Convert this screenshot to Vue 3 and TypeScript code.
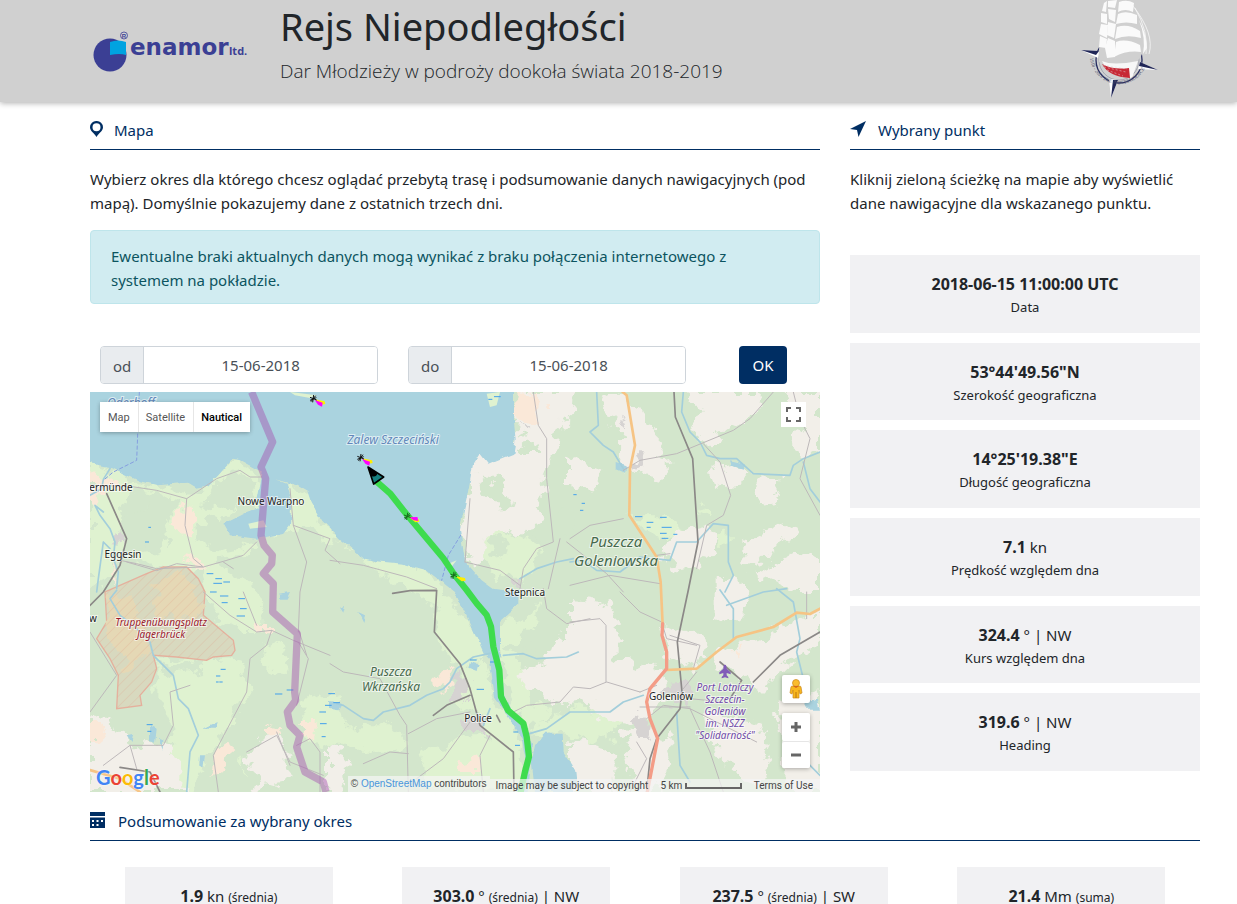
<script setup lang="ts">
import { ref } from 'vue'

interface Stat {
  value: string
  unit?: string
  note?: string
  tail?: string
  label?: string
}

const from = ref('15-06-2018')
const to = ref('15-06-2018')
const mapType = ref('Nautical')
const mapTypes = ['Map', 'Satellite', 'Nautical']

const point: Stat[] = [
  { value: '2018-06-15 11:00:00 UTC', label: 'Data' },
  { value: '53°44\'49.56"N', label: 'Szerokość geograficzna' },
  { value: '14°25\'19.38"E', label: 'Długość geograficzna' },
  { value: '7.1', unit: 'kn', label: 'Prędkość względem dna' },
  { value: '324.4', unit: '° | NW', label: 'Kurs względem dna' },
  { value: '319.6', unit: '° | NW', label: 'Heading' },
]

const summary: Stat[] = [
  { value: '1.9', unit: 'kn', note: '(średnia)' },
  { value: '303.0', unit: '°', note: '(średnia)', tail: '| NW' },
  { value: '237.5', unit: '°', note: '(średnia)', tail: '| SW' },
  { value: '21.4', unit: 'Mm', note: '(suma)' },
]

// Terrain is drawn on a 2190 x 1200 grid, three units per map pixel.
const beige = [
  'M1150 190L1270 180L1280 0L1460 0L1455 60L1400 110L1390 190L1360 260L1350 330L1340 400L1310 440L1240 410L1190 440L1180 510L1130 500L1110 400Z',
  'M1520 20L1610 0L1640 60L1680 110L1720 150L1700 190L1740 220L1700 260L1650 250L1600 240L1580 190L1610 130L1560 90Z',
  'M1790 0L2010 0L2000 70L1930 110L1880 150L1830 140L1800 90L1830 50Z',
  'M2090 0L2190 0L2190 170L2140 200L2100 170L2130 90Z',
  'M1440 200L1490 220L1540 230L1520 290L1470 300L1440 280Z',
  'M1860 230L1930 220L1970 250L1940 290L1880 280Z',
  'M2000 250L2080 260L2070 320L2010 330L2000 290Z',
  'M2020 420L2090 390L2110 420L2060 480L2010 510L1960 520L1960 460Z',
  'M1740 430L1850 400L1880 470L1820 520L1750 530L1720 490Z',
  'M1880 550L1960 560L1980 650L1940 700L1880 680Z',
  'M1440 620L1540 630L1580 690L1580 790L1640 830L1700 800L1730 870L1700 960L1640 1000L1560 980L1500 950L1440 880Z',
  'M1700 690L1830 720L1850 800L1800 830L1730 780Z',
  'M1880 780L2010 740L2190 650L2190 740L2080 830L2010 900L1950 850L1900 830Z',
  'M1990 540L2120 600L2190 600L2190 500L2110 480Z',
  'M1400 730L1470 720L1500 790L1560 850L1500 930L1390 940L1350 900L1290 870L1310 830L1370 810Z',
  'M1440 1050L1560 1070L1600 1120L1560 1200L1440 1200Z',
  'M1600 1020L1720 1010L1750 1100L1700 1200L1640 1190Z',
  'M1850 960L2000 990L2040 1080L2000 1190L1930 1140L1860 1060Z',
  'M2060 940L2190 900L2190 1200L2090 1200Z',
  'M0 970L60 980L110 1060L220 1060L280 1130L280 1200L0 1200Z',
  'M470 1070L560 1020L600 1100L590 1170L500 1190Z',
  'M720 1070L760 1090L770 1160L720 1200Z',
]
const grass = [
  'M0 210L80 240L150 280L320 300L430 200L500 235L520 300L450 340L400 400L350 370L280 420L220 300L140 290L90 350L100 450L60 560L0 590Z',
  'M510 270L640 290L700 390L750 440L720 460L640 400L610 440L540 430L500 440L490 380Z',
  'M230 350L310 350L320 440L400 470L500 450L500 480L380 500L350 530L200 530L130 500L220 480Z',
  'M750 450L840 500L1000 520L1060 570L1080 620L1150 720L1200 790L1120 830L1060 780L1030 700L1050 640L960 600L850 530Z',
  'M1220 410L1330 450L1350 490L1310 560L1230 560L1180 500L1190 430Z',
  'M190 800L400 790L460 800L470 900L430 980L360 1080L300 1200L230 1200L250 1000L190 900Z',
  'M330 530L420 520L520 640L520 720L460 720L390 680L340 590Z',
  'M640 920L740 900L760 1000L900 1000L960 1060L850 1070L720 1070L640 1030Z',
  'M520 770L570 750L600 810L550 850Z',
  'M1130 830L1190 800L1210 920L1260 970L1290 1030L1280 1100L1220 1080L1160 960L1090 930Z',
  'M1230 700L1330 660L1360 630L1320 700L1250 770L1370 830L1310 870L1330 940L1390 950L1330 1010L1270 960L1240 860Z',
  'M1320 1010L1440 950L1580 960L1590 1020L1500 1060L1440 1030Z',
  'M990 1080L1130 1030L1230 1030L1290 1120L1280 1200L1130 1190L1020 1170Z',
  'M1630 370L1760 370L1770 430L1720 450L1660 410Z',
  'M1860 430L1910 410L1910 480Z',
  'M1830 340L1860 350L1870 380L1820 360Z',
  'M440 1100L470 1090L460 1140Z',
]
const forest = [
  'M1160 260L1240 260L1260 330L1230 350L1190 310Z',
  'M1290 150L1340 140L1350 180L1300 180Z',
  'M1200 430L1240 440L1250 480L1220 500Z',
  'M1360 370L1440 340L1460 400L1400 450L1320 440Z',
  'M100 380L210 320L280 330L230 400L210 470L120 490L90 430Z',
  'M370 280L440 240L500 270L480 320L430 350L340 340Z',
  'M190 820L330 800L340 830L240 850Z',
  'M1300 760L1360 790L1380 810L1290 840Z',
  'M1580 1020L1600 1010L1620 1150L1600 1200L1570 1180Z',
]
const peach = [
  'M250 400L280 340L310 350L305 430L280 440Z', 'M280 490L345 500L340 530L310 530Z',
  'M1270 10L1340 0L1360 40L1335 100L1285 95Z', 'M500 690L540 690L540 730L510 730Z',
  'M1040 860L1080 820L1085 870L1050 900Z', 'M0 240L60 250L90 290L40 300L20 330L0 320Z',
  'M540 1000L580 1010L570 1030L540 1030Z', 'M630 990L680 990L680 1030L640 1030Z',
  'M380 1070L415 1060L400 1130L370 1160Z', 'M1110 1110L1160 1100L1170 1140L1120 1140Z',
  'M1920 770L1950 770L1940 800Z', 'M0 990L40 1000L30 1060L0 1060Z', 'M60 540L90 500L60 600Z',
]
const towns = [
  'M1080 880L1110 830L1135 880L1130 910L1080 930Z', 'M1610 970L1650 960L1690 1020L1680 1050L1650 1050Z',
  'M1720 880L1790 870L1800 930L1740 950Z', 'M1635 190L1670 190L1660 220L1625 240Z',
  'M1110 985L1170 990L1200 1020L1150 1020Z', 'M90 410L110 430L100 460L85 440Z',
  'M1280 105L1320 115L1300 125Z', 'M1260 570L1290 560L1290 590Z', 'M1580 80L1620 90L1610 110Z',
]
const rivers = [
  'M60 230L40 262L35 290L0 310M40 360L15 340L30 370L60 410L75 450L70 500L85 540L80 590',
  'M60 470L40 450L25 560L20 600M80 595L60 620L90 670L130 700L180 750L190 790L250 850L265 920L295 950L325 1030L300 1080L290 1200',
  'M1240 790L1300 785L1340 800L1430 795L1465 780',
  'M1200 784L1150 795L1100 830L1080 870L1060 890L1010 910L960 940L880 960L850 985L820 980L760 940L740 935',
  'M1520 0L1525 100L1500 120L1540 160L1570 180L1600 230',
  'M1780 0L1775 60L1800 120L1830 150L1850 190L1890 200L1940 200L1990 245L2100 250L2110 220L2140 200L2190 180M2140 210L2160 290L2190 330',
  'M1440 510L1480 505L1520 535L1590 540L1650 495L1740 505L1760 450L1820 450L1870 395L1915 400L1915 510L1930 550L1905 600',
  'M1290 560L1340 530L1400 510L1450 500', 'M1890 594L1930 650L1930 740M2060 590L2110 630L2130 740L2120 780L2150 900',
  'M1910 640L2020 600L2090 590', 'M1300 1030L1370 1010L1440 960L1560 960L1600 930L1660 910',
  'M1760 960L1770 1120L1800 1170M1180 1000L1200 950M2140 1100L2190 1150',
]
const roads = [
  'M0 280L120 283L200 295L290 320L380 260L450 235L480 255L515 255M290 320L285 400L310 500L340 525L200 530L140 515L90 505',
  'M110 510L200 536L260 515L340 525L400 508L460 490L500 450M430 530L400 510M600 290L610 400L720 440L705 475L750 515',
  'M610 400L650 510L630 600L625 720M340 600L420 670L500 720L545 715L610 745L720 790M460 600L500 700',
  'M545 715L530 760L480 800L470 900L370 1090L385 1200M625 750L655 800L620 940M625 710L650 790',
  'M720 505L820 520L950 555L1040 590M0 720L80 850L0 960M300 880L240 900L250 1000L220 1060L120 1060L40 1120M120 1060L140 1130',
  'M470 1080L560 1030L600 1110L700 1150M560 1020L600 1120M690 1200L690 1080L660 1040L620 1060',
  'M720 815L760 840L870 860L930 970L950 1000L955 1200M955 1025L1040 980L1140 960M820 1115L900 1080L955 1085',
  'M1140 990L1060 1100L980 1160M1200 1030L1170 1090L1180 1200M1270 960L1310 940L1410 930L1450 885L1500 890L1550 870L1650 900',
  'M1360 590L1370 650L1430 695L1500 680M1440 690L1530 680L1548 700L1548 870M1590 600L1650 660L1715 690L1730 740L1820 760',
  'M1600 380L1500 400L1440 440M1600 235L1650 205L1760 185L1930 115L1980 80L2050 0M1840 155L1890 210L1922 310L1900 370L1850 400L1820 530',
  'M1440 580L1560 550L1710 575M1430 450L1550 545L1600 600M1740 485L1700 490M1740 730L1830 760L1810 830',
  'M1330 0L1345 100L1370 140L1370 260L1390 450L1340 470L1300 530L1290 590M1125 510L1230 535L1290 580M1410 440L1375 590M1140 320L1125 510',
  'M2110 0L2130 80L2160 140L2140 220L2130 260L2190 370M1670 980L1720 940L1800 950L2000 1050M1800 920L1900 930M1800 950L1860 1080L1900 1200',
  'M2150 600L2150 680M1780 890L1820 840M1640 1050L1670 1100L1620 1200M1650 945L1800 945M1700 880L1650 900',
]
const rails = [
  'M90 1126L180 1140L210 1200M50 305L110 440L90 520L40 600L0 640', 'M908 604L960 596L1040 595L1033 720L1110 815L1140 890L1170 1000L1270 1080L1272 1200',
  'M1140 910L1070 940L1030 970M1230 990L1220 970', 'M1752 0L1756 75L1808 200L1824 450L1795 594L1762 750L1776 900L1770 950L1700 1040L1680 1100L1670 1200',
  'M1890 810L1955 865L1920 920M1990 870L2070 790L2190 720',
]
const orange = [
  'M1598 0L1610 10L1635 160L1620 230L1618 370L1700 495L1712 570L1718 700',
  'M1728 834L1820 830L1880 780L1940 735L2050 705L2120 662L2160 666L2190 650', 'M0 1134L90 1160L150 1200',
]
const coral = 'M1718 695L1716 730L1730 780L1730 830L1680 890L1670 930L1680 980L1703 1040L1672 1200'
const border =
  'M485 0L548 150L513 225L527 260L522 320L513 430L522 460L547 490L545 515L520 545L550 575L548 660L622 725L614 900L617 925L592 960L600 1000L630 1030L620 1065L645 1140L700 1170L708 1200'
const track =
  'M860 269L900 304L952 370L1060 499L1091 545L1130 594L1160 634L1190 669L1203 704L1210 764L1228 834L1233 914L1255 956L1300 994L1310 1034L1317 1094L1305 1139L1292 1200'
const marsh =
  'M350 545h20M376 560h20M370 574h26M400 570h20M360 600h20M390 612h25M445 620h20M450 650h20M440 672h25M395 632h18M392 832h15M378 852h13M378 870h8M388 870h10M555 906h22M590 894h20M715 905h20M705 940h20M730 932h20M690 995h20M695 1034h12M688 960h20M1635 374h22M1670 391h20M1710 376h20M1715 406h30M1670 406h12M1710 424h20M1715 439h20M1750 427h12M1450 308h10M1475 334h10M1470 355h10M1140 804h20M1160 892h22M1200 810h12M1270 1020h15M1275 1060h15M170 998h18M172 1018h12M1195 22h12M1212 14h20M175 406h8M165 450h12'
</script>

<template>
  <div class="page">
    <header class="banner">
      <svg class="enamor" viewBox="0 0 154 42" role="img" aria-label="enamor ltd.">
        <circle cx="17" cy="24" r="16.500" fill="#3b3f94" />
        <path d="M17 11Q25 8 33 11V24Q27 22 17 24Z" fill="#00a3e0" />
        <circle cx="31" cy="4.500" r="3.500" fill="none" stroke="#3b3f94" stroke-width="0.800" />
        <text x="31" y="6.500" class="reg">R</text>
        <text x="37" y="24" class="brand">enamor</text>
        <text x="136" y="24" class="ltd">ltd.</text>
      </svg>
      <div class="titles">
        <h1>Rejs Niepodległości</h1>
        <p class="lead">Dar Młodzieży w podroży dookoła świata 2018-2019</p>
      </div>
      <svg class="ship" viewBox="0 0 80 100" role="img" aria-label="1918 - 2018 The Independence Sail">
        <defs><path id="ring" d="M11 58A29 29 0 0 0 69 52" /></defs>
        <circle cx="40" cy="60" r="23" fill="none" stroke="#252a5e" stroke-width="1.300" />
        <circle cx="40" cy="60" r="20" fill="none" stroke="#777a93" stroke-width="0.500" />
        <path d="M2 50L20 51L19 58ZM79 70L61 62L59 69ZM32 98L30 79L39 80Z" fill="#fff" />
        <path d="M2 50L20 51L17 55ZM79 70L61 62L60 66ZM32 98L34 80L39 80Z" fill="#202657" />
        <path d="M22 5Q20 30 20 62L50 76L58 61Q66 55 65 35L55 11L44 0Z" fill="#d0d0d0" />
        <path d="M23 61Q34 66 59 61L53 78Q30 77 23 61Z" fill="#f7f7f7" />
        <path d="M23 64Q34 70 50 68L51 78Q30 77 23 64Z" fill="#c72835" />
        <path d="M24 65L48 69M25 67L47 72M28 70L44 76" fill="none" stroke="#ddd" stroke-width="0.500" stroke-dasharray="2 2" />
        <g fill="#fafafa">
          <path d="M25 3L28 1L27 12L23 11ZM22 13L28 14L28 24L22 22ZM22 24L29 25L28 38L20 34ZM21 36L28 39L27 48L20 47Z" />
          <path d="M29 1L38 0L36 8L29 7ZM29 9L37 10L36 22L30 19ZM29 22L37 24L35 38L28 35ZM29 38L36 41L36 57L28 58L26 48Z" />
          <path d="M40 2Q48 -1 55 3L54 12Q46 8 39 12ZM39 14Q47 10 58 15L58 24Q47 21 37 24ZM38 27Q49 23 61 31L62 38Q48 34 36 39ZM37 42Q47 38 61 45L62 52Q48 50 35 57Z" />
          <path d="M60 20Q67 32 68 48L64 54Q67 38 60 20Z" />
        </g>
        <path d="M56 8Q70 32 67 54M54 6Q76 34 70 54" fill="none" stroke="#f8f8f8" stroke-width="0.800" />
        <text class="ringtext"><textPath href="#ring">1918 - 2018 THE INDEPENDENCE</textPath></text>
      </svg>
    </header>

    <main class="content">
      <div class="columns">
        <section>
          <h2 class="heading">
            <svg class="icon" viewBox="0 0 13 16" aria-hidden="true"><path fill="#002e63" fill-rule="evenodd" d="M6.500 0A6.300 6.300 0 0 0 0 6.300C0 10 4 12 6.500 16C9 12 13 10 13 6.300A6.300 6.300 0 0 0 6.500 0ZM6.500 2.200A4 4 0 1 1 6.500 10.200A4 4 0 0 1 6.500 2.200Z" /></svg>
            Mapa
          </h2>
          <p class="intro">Wybierz okres dla którego chcesz oglądać przebytą trasę i podsumowanie danych nawigacyjnych (pod mapą). Domyślnie pokazujemy dane z ostatnich trzech dni.</p>
          <div class="alert">Ewentualne braki aktualnych danych mogą wynikać z braku połączenia internetowego z systemem na pokładzie.</div>

          <form class="range" @submit.prevent>
            <div class="group">
              <label for="from">od</label>
              <input id="from" v-model="from" type="text" />
            </div>
            <div class="group">
              <label for="to">do</label>
              <input id="to" v-model="to" type="text" />
            </div>
            <button type="submit" class="ok">OK</button>
          </form>

          <div class="map">
            <svg class="terrain" viewBox="0 0 730 400" preserveAspectRatio="xMidYMid slice" role="img" aria-label="Mapa">
              <defs>
                <filter id="rough" x="-10%" y="-10%" width="120%" height="120%">
                  <feTurbulence type="fractalNoise" baseFrequency="0.022" numOctaves="4" seed="4" />
                  <feDisplacementMap in="SourceGraphic" scale="75" xChannelSelector="R" yChannelSelector="G" />
                </filter>
                <filter id="shore">
                  <feTurbulence type="fractalNoise" baseFrequency="0.030" numOctaves="3" seed="9" />
                  <feDisplacementMap in="SourceGraphic" scale="16" xChannelSelector="R" yChannelSelector="G" />
                </filter>
                <pattern id="hatch" width="22" height="22" patternUnits="userSpaceOnUse" patternTransform="rotate(45)">
                  <path d="M0 0V22" stroke="#e09a85" stroke-width="2" />
                </pattern>
              </defs>
              <g transform="scale(0.33333)">
                <path d="M0 0H2190V1200H0Z" fill="#d3e6cc" />
                <g filter="url(#rough)">
                  <path v-for="d in grass" :key="d" :d="d" fill="#dff2d0" />
                  <path v-for="d in beige" :key="d" :d="d" fill="#f2efe9" />
                  <path v-for="d in forest" :key="d" :d="d" fill="#d3e6cc" />
                  <path v-for="d in peach" :key="d" :d="d" fill="#fae8d8" />
                  <path v-for="d in towns" :key="d" :d="d" fill="#d6d3d2" />
                </g>
                <path d="M170 545L220 525L290 525L325 560L345 600L340 670L430 745L435 775L425 790L370 795L350 805L260 795L190 790L200 830L185 870L150 910L155 940L80 950L85 850L60 800L20 740L50 690L45 600Z" fill="#d8d9bf" stroke="#e5b09d" stroke-width="4" />
                <g filter="url(#rough)" fill="#e5d8b5"><path d="M190 560L290 540L330 640L310 700L190 660ZM60 610L130 620L180 780L110 830L50 720Z" /></g>
                <path d="M170 545L220 525L290 525L325 560L345 600L340 670L430 745L435 775L425 790L370 795L350 805L260 795L190 790L200 830L185 870L150 910L155 940L80 950L85 850L60 800L20 740L50 690L45 600Z" fill="url(#hatch)" opacity="0.600" />
                <g filter="url(#shore)" fill="#aad3df">
                  <path d="M-20 -20H1272V90L1277 145L1270 185L1220 205L1195 215L1170 184L1150 215L1130 320L1110 410L1125 508L1175 565L1210 590L1285 600L1285 640L1230 690L1230 820L1240 900L1260 950L1305 1000L1325 1060L1325 1110L1310 1220H1285L1310 1120L1295 1040L1255 975L1215 920L1205 850L1200 800L1180 780L1130 670L1095 600L1050 565L1010 535L940 515L860 508L825 500L750 440L700 390L665 330L655 300L620 280L555 262L590 275L605 320L600 400L580 425L500 440L420 430L400 395L470 360L510 345L500 320L515 240L450 205L430 200L380 255L350 285L320 290L290 272L200 280L150 268L85 238L60 225L-20 210Z" />
                  <path d="M1335 1060L1360 1025L1415 1025L1418 1080L1445 1120L1450 1200H1335L1325 1110ZM1580 210L1610 220L1605 245L1580 235ZM1920 205L1965 215L1960 230L1925 222ZM180 1000L200 1010L195 1055L180 1050ZM340 1010L380 990L375 1010ZM330 1090L345 1090L340 1125L328 1120ZM110 1030L130 1025L125 1050ZM750 650L765 645L760 665ZM805 660L825 670L820 690ZM720 930L755 935L745 955L720 950ZM570 605L600 600L590 620L570 620ZM2140 930L2180 920L2190 950L2150 950ZM1440 1120L1455 1130L1460 1180L1440 1190ZM1140 810L1165 820L1160 840L1135 830ZM207 1040L220 1045L218 1070Z" />
                </g>
                <path d="M1190 5L1230 0L1220 40L1200 45ZM600 0L680 10L660 18L615 10ZM1075 515L1100 505L1080 530ZM475 395L520 385L530 405L480 410Z" fill="#dff2d0" />
                <g fill="none" stroke-linejoin="round" stroke-linecap="round">
                  <path v-for="d in rivers" :key="d" :d="d" stroke="#a3cedb" stroke-width="5" />
                  <path v-for="d in roads" :key="d" :d="d" stroke="#bdb8ba" stroke-width="3" />
                  <path v-for="d in rails" :key="d" :d="d" stroke="#8b8887" stroke-width="5" />
                  <path v-for="d in orange" :key="d" :d="d" stroke="#f6c484" stroke-width="8" />
                  <path :d="coral" stroke="#f49c86" stroke-width="10" />
                  <path :d="marsh" stroke="#409fec" stroke-width="3" stroke-linecap="butt" />
                  <path d="M148 0L140 205L70 240L40 265M1112 430L1075 490L1055 565" stroke="#859ee0" stroke-width="3" stroke-dasharray="10 8" />
                  <path :d="border" stroke="#a44fb0" stroke-width="22" stroke-linecap="butt" opacity="0.450" />
                  <path :d="track" stroke="#3edc4e" stroke-width="19" />
                </g>
                <g v-for="(m, i) in [[670, 20], [812, 197], [952, 373], [1091, 550]]" :key="i" :transform="`translate(${m[0]} ${m[1]})`">
                  <path d="M4 2L34 8L36 16L24 18Z" fill="#ffee00" />
                  <path v-if="i < 3" d="M4 4L28 12L26 24L14 18Z" fill="#f0f" :transform="i === 2 ? 'rotate(-20)' : ''" />
                  <path d="M-10 -4L10 4M-7 9L7 -9M1 -11L-2 11M-10 5L9 -3" :stroke="i < 2 ? '#111' : '#176b1d'" stroke-width="3" />
                </g>
                <path d="M834 225L881 255L851 276Z" fill="#16807f" stroke="#000" stroke-width="5" stroke-linejoin="round" />
                <path d="M834 225L862 243Q860 258 843 252Z" fill="#000" />
                <path d="M1905 818C1909 818 1910 824 1910 830L1922 841V847L1910 843V850L1915 855V859L1905 856L1895 859V855L1900 850V843L1888 847V841L1900 830C1900 824 1901 818 1905 818Z" fill="#805ab8" />
              </g>
              <g class="places">
                <text class="sea" x="41" y="15" font-size="12">Oderhoff</text>
                <text class="sea" x="303" y="52" font-size="12">Zalew Szczeciński</text>
                <text x="181" y="113">Nowe Warpno</text>
                <text x="21" y="99">ermünde</text>
                <text x="33" y="166">Eggesin</text>
                <text x="3" y="230">w</text>
                <text x="435" y="204">Stepnica</text>
                <text x="388" y="330">Police</text>
                <text x="581" y="308">Goleniów</text>
                <g class="wood" font-size="15"><text x="526" y="155">Puszcza</text><text x="526" y="174">Goleniowska</text></g>
                <g class="wood" font-size="12"><text x="301" y="284">Puszcza</text><text x="301" y="299">Wkrzańska</text></g>
                <g class="army"><text x="71" y="234">Truppenübungsplatz</text><text x="71" y="246">Jägerbrück</text></g>
                <g class="air"><text x="635" y="299">Port Lotniczy</text><text x="635" y="311">Szczecin-</text><text x="635" y="323">Goleniów</text><text x="635" y="335">im. NSZZ</text><text x="635" y="347">"Solidarność"</text></g>
              </g>
            </svg>

            <div class="types">
              <button v-for="t in mapTypes" :key="t" type="button" :class="{ on: t === mapType }" @click="mapType = t">{{ t }}</button>
            </div>
            <button type="button" class="full" aria-label="Fullscreen">
              <svg viewBox="0 0 15 15" aria-hidden="true"><path d="M1 5V1H5M10 1H14V5M14 10V14H10M5 14H1V10" fill="none" stroke="#666" stroke-width="2" /></svg>
            </button>
            <div class="side">
              <button type="button" class="pegman" aria-label="Street View">
                <svg viewBox="0 0 14 20" aria-hidden="true">
                  <path d="M2 8Q2 7 4 7H10Q12 7 12 8L13 14L11 15L10 11V19H4V11L3 15L1 14Z" fill="#f9b71e" stroke="#c9871c" stroke-width="0.700" />
                  <path d="M7 13V19" stroke="#b87511" />
                  <circle cx="7" cy="4" r="3.500" fill="#fbbc2c" stroke="#c9871c" stroke-width="0.700" />
                  <path d="M4 7H10L7 9Z" fill="#d5651b" />
                </svg>
              </button>
              <div class="zoom">
                <button type="button" aria-label="Zoom in"><svg viewBox="0 0 12 12" aria-hidden="true"><path d="M1 6H11M6 1V11" stroke="#666" stroke-width="3" /></svg></button>
                <button type="button" aria-label="Zoom out"><svg viewBox="0 0 12 12" aria-hidden="true"><path d="M1 6H11" stroke="#666" stroke-width="3" /></svg></button>
              </div>
            </div>
            <div class="google" aria-label="Google"><span class="b">G</span><span class="r">o</span><span class="y">o</span><span class="b">g</span><span class="g">l</span><span class="r">e</span></div>
            <div class="credits">
              <span class="osm">© <a href="#">OpenStreetMap</a> contributors</span>
              <div class="legal">
                <span>Image may be subject to copyright</span>
                <span class="scale">5 km <i></i></span>
                <a href="#">Terms of Use</a>
              </div>
            </div>
          </div>
        </section>

        <section>
          <h2 class="heading">
            <svg class="icon arrow" viewBox="0 0 16 16" aria-hidden="true"><path fill="#002e63" d="M16 0L0 8L7 9L8.500 16Z" /></svg>
            Wybrany punkt
          </h2>
          <p class="intro">Kliknij zieloną ścieżkę na mapie aby wyświetlić dane nawigacyjne dla wskazanego punktu.</p>
          <div class="cards">
            <div v-for="s in point" :key="s.label" class="card">
              <div class="value"><strong>{{ s.value }}</strong> {{ s.unit }}</div>
              <div class="label">{{ s.label }}</div>
            </div>
          </div>
        </section>
      </div>

      <section class="period">
        <h2 class="heading">
          <svg class="icon calc" viewBox="0 0 15 16" aria-hidden="true">
            <path fill="#002e63" d="M0 0H15V4H0ZM0 5.500H15V16H0Z" />
            <path fill="#fff" d="M2 8h2v2h-2zM6.500 8h2v2h-2zM11 8h2v2h-2zM2 12h2v2h-2zM6.500 12h2v2h-2z" />
          </svg>
          Podsumowanie za wybrany okres
        </h2>
        <div class="summary">
          <div v-for="s in summary" :key="s.value" class="card">
            <div class="value"><strong>{{ s.value }}</strong> {{ s.unit }} <small>{{ s.note }}</small> {{ s.tail }}</div>
          </div>
        </div>
      </section>
    </main>
  </div>
</template>

<style>
html,
body {
  margin: 0;
  background: #fff;
}
</style>

<style scoped>
* {
  box-sizing: border-box;
}
.page {
  height: 100vh;
  overflow: hidden;
  font: 15px/24px "Noto Sans", "Open Sans", sans-serif;
  color: #212529;
}
.banner {
  display: flex;
  align-items: flex-start;
  height: 102px;
  padding: 0 78px 0 93px;
  background: #d0d0d0;
  box-shadow: 0 1px 6px #aaa;
}
.enamor {
  width: 154px;
  height: 42px;
  margin-top: 31px;
  overflow: visible;
}
.brand {
  font: bold 23px "DejaVu Sans", sans-serif;
  fill: #3b3f94;
}
.ltd {
  font: bold 11px "Open Sans", sans-serif;
  fill: #3b3f94;
}
.reg {
  font: bold 6px "Liberation Sans", sans-serif;
  fill: #3b3f94;
  text-anchor: middle;
}
.titles {
  flex: 1;
  margin-left: 33px;
}
h1 {
  margin: 0;
  font-size: 38px;
  font-weight: 400;
  line-height: 52px;
}
.lead {
  margin: 4px 0 0;
  font-family: "Open Sans", "Noto Sans", sans-serif;
  font-size: 19px;
  font-weight: 300;
  line-height: 30px;
}
.ship {
  width: 80px;
  height: 100px;
}
.ringtext {
  font: 5px "Liberation Serif", serif;
  fill: #555872;
}
.content {
  padding: 0 37px 0 90px;
}
.columns {
  display: grid;
  grid-template-columns: minmax(0, 730fr) minmax(0, 350fr);
  gap: 30px;
}
.heading {
  display: flex;
  align-items: center;
  height: 48px;
  margin: 0 0 17px;
  padding-top: 9px;
  border-bottom: 1px solid #002e63;
  font-size: 15px;
  font-weight: 400;
  color: #002e63;
}
.icon {
  width: 13px;
  height: 16px;
  margin: 0 11px 3px 0;
}
.arrow {
  width: 16px;
  margin-right: 12px;
}
.calc {
  width: 15px;
  margin-right: 13px;
}
.intro {
  margin: 0 0 15px;
}
.alert {
  padding: 13px 20px 11px;
  border: 1px solid #bee5eb;
  border-radius: 4px;
  background: #d1ecf1;
  color: #0c5460;
}
.range {
  display: flex;
  gap: 30px;
  margin: 42px 0 8px;
  padding: 0 33px 0 10px;
}
.group {
  display: flex;
  flex: 0 1 278px;
  min-width: 0;
  height: 38px;
  border: 1px solid #ced4da;
  border-radius: 4px;
  overflow: hidden;
}
.group label {
  padding: 7px 12px;
  border-right: 1px solid #ced4da;
  background: #e9ecef;
  color: #495057;
}
.group input {
  flex: 1;
  min-width: 0;
  border: 0;
  padding: 4px 12px;
  background: #fff;
  font: 15px "Noto Sans", sans-serif;
  color: #495057;
  text-align: center;
}
.ok {
  width: 48px;
  height: 38px;
  margin-left: auto;
  padding: 0;
  border: 0;
  border-radius: 4px;
  background: #002e63;
  color: #fff;
  font: 15px "Noto Sans", sans-serif;
}
.map {
  position: relative;
  height: 400px;
  overflow: hidden;
}
.terrain {
  display: block;
  width: 100%;
  height: 100%;
}
.places text {
  font-family: "Noto Sans", sans-serif;
  text-anchor: middle;
  paint-order: stroke;
  stroke: rgba(255, 255, 255, 0.6);
  stroke-width: 2px;
  fill: #222;
}
.places {
  font-size: 10px;
}
.places .sea {
  fill: #6188ba;
  font-style: italic;
}
.places .wood text {
  fill: #46694c;
  font-style: italic;
}
.places .army text {
  fill: #9a1a2d;
  font-style: italic;
}
.places .air text {
  fill: #704ba8;
  font-style: italic;
}
.map button {
  padding: 0;
  border: 0;
  background: #fff;
}
.types {
  position: absolute;
  top: 10px;
  left: 10px;
  display: flex;
  border-radius: 2px;
  box-shadow: 0 1px 4px rgba(0, 0, 0, 0.3);
}
.map .types button {
  height: 30px;
  padding: 0 8px;
  font: 11px Roboto, sans-serif;
  color: #565656;
}
.types button + button {
  box-shadow: inset 1px 0 #e6e6e6;
}
.map .types .on {
  font-weight: 500;
  color: #000;
}
.full {
  position: absolute;
  top: 10px;
  right: 14px;
  display: flex;
  align-items: center;
  justify-content: center;
  width: 25px;
  height: 25px;
}
.full svg {
  width: 15px;
  height: 15px;
}
.side {
  position: absolute;
  right: 10px;
  bottom: 24px;
  width: 28px;
}
.side button {
  display: flex;
  align-items: center;
  justify-content: center;
  width: 28px;
  height: 28px;
  border-radius: 2px;
}
.side .pegman {
  margin-bottom: 10px;
  box-shadow: 0 1px 4px rgba(0, 0, 0, 0.3);
}
.pegman svg {
  width: 14px;
  height: 20px;
}
.zoom {
  border-radius: 2px;
  box-shadow: 0 1px 4px rgba(0, 0, 0, 0.3);
}
.zoom svg {
  width: 12px;
  height: 12px;
}
.zoom button + button {
  height: 27px;
  box-shadow: inset 0 1px #e6e6e6;
}
.google {
  position: absolute;
  left: 6px;
  bottom: 2px;
  font: 20px/26px Lato, sans-serif;
  font-weight: 700;
  text-shadow: 0 0 2px #fff;
}
.b {
  color: #4285f4;
}
.r {
  color: #ea4335;
}
.y {
  color: #fbbc05;
}
.g {
  color: #34a853;
}
.credits {
  position: absolute;
  right: 0;
  bottom: 0;
  display: flex;
  align-items: flex-end;
  font: 10px/12px Roboto, sans-serif;
  color: #444;
}
.osm {
  padding: 2px 3px;
  background: rgba(245, 245, 245, 0.7);
  font: 10px/12px "Liberation Sans", sans-serif;
}
.osm a {
  color: #4a96dc;
  text-decoration: none;
}
.legal {
  display: flex;
  gap: 12px;
  padding: 1px 7px 0 6px;
  background: rgba(245, 245, 245, 0.7);
}
.legal a {
  color: #444;
  text-decoration: none;
}
.scale i {
  display: inline-block;
  width: 57px;
  height: 6px;
  border: 2px solid #666;
  border-top: 0;
}
.cards {
  display: grid;
  grid-auto-rows: 1fr;
  gap: 10px;
  min-height: 516px;
  margin-top: 40px;
}
.card {
  padding: 17px 0 13px;
  background: #f1f1f3;
  text-align: center;
}
.value strong {
  font-size: 16px;
}
.label {
  font-size: 13px;
  line-height: 22px;
}
small {
  font-size: 12px;
}
.period {
  margin-top: 1px;
}
.summary {
  display: grid;
  grid-template-columns: repeat(4, 1fr);
  margin-top: 26px;
}
.summary .card {
  width: 75%;
  min-height: 78px;
  margin: 0 auto;
}
</style>
